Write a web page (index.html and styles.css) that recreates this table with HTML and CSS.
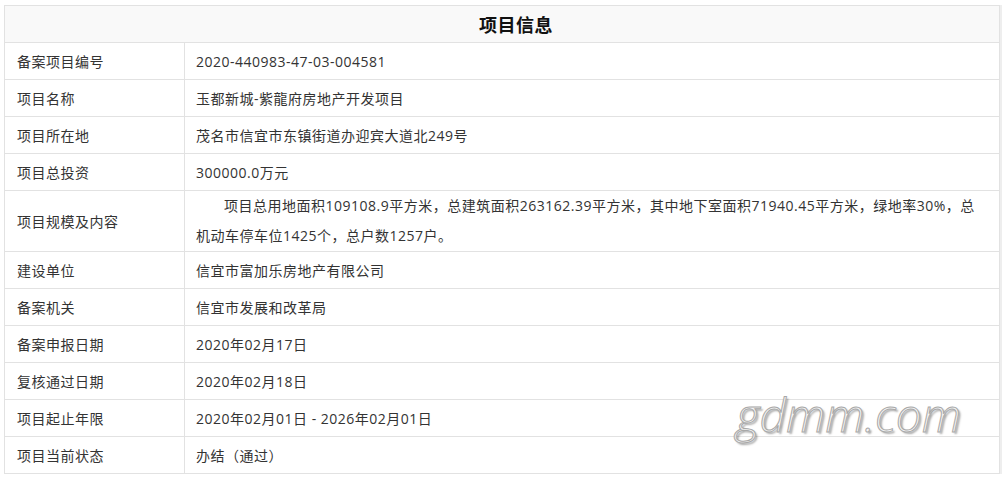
FILE: index.html
```html
<!DOCTYPE html>
<html lang="zh-CN">
<head>
  <meta charset="UTF-8">
  <meta name="viewport" content="width=device-width, initial-scale=1.0">
  <title>项目信息</title>
  <link rel="stylesheet" href="styles.css">
</head>
<body>
  <div class="wrap">
    <table class="info">
      <thead>
        <tr>
          <th colspan="2"><span class="title">项目信息</span></th>
        </tr>
      </thead>
      <tbody>
        <tr><td class="label">备案项目编号</td><td>2020-440983-47-03-004581</td></tr>
        <tr><td class="label">项目名称</td><td>玉都新城-紫龍府房地产开发项目</td></tr>
        <tr><td class="label">项目所在地</td><td>茂名市信宜市东镇街道办迎宾大道北249号</td></tr>
        <tr><td class="label">项目总投资</td><td>300000.0万元</td></tr>
        <tr class="tall">
          <td class="label">项目规模及内容</td>
          <td><p class="desc">项目总用地面积109108.9平方米，总建筑面积263162.39平方米，其中地下室面积71940.45平方米，绿地率30%，总机动车停车位1425个，总户数1257户。</p></td>
        </tr>
        <tr><td class="label">建设单位</td><td>信宜市富加乐房地产有限公司</td></tr>
        <tr><td class="label">备案机关</td><td>信宜市发展和改革局</td></tr>
        <tr><td class="label">备案申报日期</td><td>2020年02月17日</td></tr>
        <tr><td class="label">复核通过日期</td><td>2020年02月18日</td></tr>
        <tr><td class="label">项目起止年限</td><td>2020年02月01日 - 2026年02月01日</td></tr>
        <tr><td class="label">项目当前状态</td><td>办结（通过）</td></tr>
      </tbody>
    </table>
    <div class="watermark">gdmm.com</div>
  </div>
</body>
</html>
```

FILE: styles.css
```css
body {
  margin: 0;
  background: #fff;
  font-family: "Open Sans", "Noto Sans CJK SC", sans-serif;
  color: #333;
}

.wrap {
  position: relative;
  padding: 5px 6px 0 4px;
}

.info {
  width: 100%;
  border-collapse: collapse;
  font-size: 14px;
  letter-spacing: 0.5px;
  box-shadow: 2px 0 0 #eee;
}

.info th,
.info td {
  border: 1px solid #e2e2e2;
  height: 36px;
  padding: 0 16px 0 11px;
  text-align: left;
  vertical-align: middle;
}

.info th {
  background: #f9f9f9;
  text-align: center;
  font-family: "Noto Sans CJK SC", sans-serif;
  font-size: 18px;
  font-weight: bold;
  color: #111;
  letter-spacing: 0.5px;
  padding-left: 44px;
}

.info td.label {
  width: 151px;
  padding-left: 12px;
}

.tall td {
  height: 59px;
}

.desc {
  margin: 0;
  line-height: 30px;
  text-indent: 2em;
}

.watermark {
  position: absolute;
  left: 736px;
  top: 391px;
  line-height: 1;
  font-family: "Open Sans", "DejaVu Sans", sans-serif;
  font-style: italic;
  font-weight: 300;
  font-size: 46px;
  color: #f4f4f4;
  -webkit-text-stroke: 1px #a8a8a8;
  text-shadow: 2px 2px 2px rgba(0, 0, 0, 0.35);
}
```
